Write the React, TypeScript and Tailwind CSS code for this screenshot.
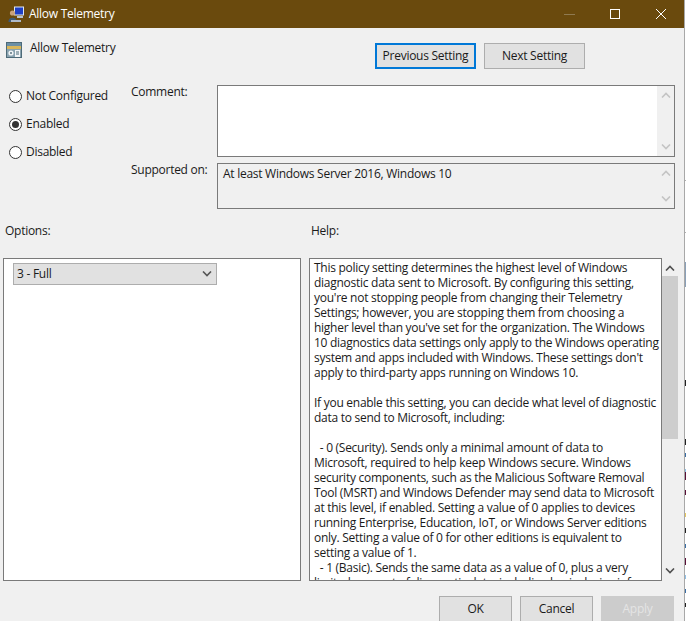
const helpLines = [
  'This policy setting determines the highest level of Windows',
  'diagnostic data sent to Microsoft. By configuring this setting,',
  "you're not stopping people from changing their Telemetry",
  'Settings; however, you are stopping them from choosing a',
  "higher level than you've set for the organization. The Windows",
  '10 diagnostics data settings only apply to the Windows operating',
  "system and apps included with Windows. These settings don't",
  'apply to third-party apps running on Windows 10.',
  ' ',
  'If you enable this setting, you can decide what level of diagnostic',
  'data to send to Microsoft, including:',
  ' ',
  '  - 0 (Security). Sends only a minimal amount of data to',
  'Microsoft, required to help keep Windows secure. Windows',
  'security components, such as the Malicious Software Removal',
  'Tool (MSRT) and Windows Defender may send data to Microsoft',
  'at this level, if enabled. Setting a value of 0 applies to devices',
  'running Enterprise, Education, IoT, or Windows Server editions',
  'only. Setting a value of 0 for other editions is equivalent to',
  'setting a value of 1.',
  '  - 1 (Basic). Sends the same data as a value of 0, plus a very',
  'limited amount of diagnostic data, including basic device info,',
];

// what shows of the window behind, along the right edge
const edgeMarks = [
  { y: 180, h: 1, c: '#b0b0b0' },
  { y: 232, h: 1, c: '#b0b0b0' },
  { y: 262, h: 25, c: '#8aa0b8' },
  { y: 380, h: 6, c: '#222222' },
  { y: 439, h: 6, c: '#222222' },
  { y: 453, h: 4, c: '#3a6ea5' },
  { y: 469, h: 3, c: '#8ec0e8' },
  { y: 472, h: 8, c: '#5a1038' },
  { y: 490, h: 5, c: '#5a1038' },
  { y: 513, h: 4, c: '#e8c860' },
  { y: 528, h: 5, c: '#222222' },
  { y: 544, h: 4, c: '#3a6ea5' },
  { y: 558, h: 7, c: '#5a1038' },
  { y: 575, h: 4, c: '#8ec0e8' },
  { y: 589, h: 4, c: '#3a6ea5' },
  { y: 603, h: 4, c: '#222222' },
];

const Chevron = ({ up, className }: { up?: boolean; className?: string }) => (
  <svg width="10" height="6" viewBox="0 0 10 6" fill="none" stroke="currentColor" strokeWidth="1.6" className={className}>
    <path d={up ? 'M1 5.5 L5 1.5 L9 5.5' : 'M1 0.5 L5 4.5 L9 0.5'} />
  </svg>
);

const WindowIcon = () => (
  <svg width="17" height="17" viewBox="0 0 17 17">
    <rect x="6" y="0.5" width="10" height="9" fill="#dfe6f2" />
    <rect x="7" y="1.5" width="8" height="7" fill="#1f3fc4" />
    <rect x="9" y="10" width="6" height="2" fill="#b9c2d0" />
    <circle cx="4.5" cy="7" r="2.6" fill="#c9a27c" />
    <path d="M0.5 15 C0.5 10.5 8.5 10.5 8.5 15 L8.5 16 L0.5 16 Z" fill="#3e5a78" />
    <rect x="3" y="14" width="10" height="2" fill="#aeb9c7" />
  </svg>
);

const SettingIcon = () => (
  <svg width="16" height="16" viewBox="0 0 16 16">
    <rect x="0" y="0" width="16" height="16" fill="#4d6a78" />
    <rect x="1" y="1" width="14" height="3" fill="#6b8fa6" />
    <rect x="1" y="4" width="14" height="3" fill="#d9b65a" />
    <rect x="1" y="7" width="14" height="8" fill="#8aa3b0" />
    <circle cx="5" cy="11" r="2.6" fill="#f2f5f7" />
    <circle cx="5" cy="11" r="1" fill="#5b7482" />
    <rect x="9" y="8" width="5" height="7" fill="#f2f5f7" />
    <path d="M10 10 H13 M10 12 H13" stroke="#4d6a78" strokeWidth="1" />
  </svg>
);

const Radio = ({ label, checked }: { label: string; checked?: boolean }) => (
  <div className="flex h-[28px] items-center">
    <span className="flex h-[13px] w-[13px] items-center justify-center rounded-full border border-[#333333] bg-white">
      {checked && <span className="h-[7px] w-[7px] rounded-full bg-[#333333]" />}
    </span>
    <span className="mb-[2px] ml-[4px]">{label}</span>
  </div>
);

const Button = ({ label, className }: { label: string; className: string }) => (
  <div className={`flex h-[26px] items-center justify-center pb-[2px] ${className}`}>{label}</div>
);

const SmallScroll = () => (
  <div className="flex w-[17px] flex-col items-center justify-between bg-[#f0f0f0] py-[6px] text-[#c4c4c4]">
    <Chevron up />
    <Chevron />
  </div>
);

export default function App() {
  return (
    <div className="flex h-[621px] w-[686px] overflow-hidden bg-white font-['Open_Sans',sans-serif] text-[12px] leading-[15px] tracking-[-0.27px] text-[#1a1a1a]">
      <div className="flex w-[684px] shrink-0 flex-col bg-[#f0f0f0]">
        {/* title bar */}
        <div className="flex h-[28px] shrink-0 items-center bg-[#6a4a0d] pl-[8px] text-white">
          <WindowIcon />
          <span className="mb-[2px] ml-[4px]">Allow Telemetry</span>
          <div className="ml-auto flex items-center pr-[18px]">
            <div className="mr-[35px] h-px w-[11px] bg-[#8f7a50]" />
            <div className="mr-[36px] h-[10px] w-[10px] border border-white" />
            <svg width="10" height="10" viewBox="0 0 10 10" stroke="white" strokeWidth="1">
              <path d="M0 0 L10 10 M10 0 L0 10" />
            </svg>
          </div>
        </div>

        {/* setting name + prev / next */}
        <div className="mt-[14px] flex h-[27px] items-start pl-[6px] pr-[99px]">
          <SettingIcon />
          <span className="ml-[8px] mt-[-2px]">Allow Telemetry</span>
          <div className="ml-auto mt-[1px] flex gap-[8px]">
            <Button label="Previous Setting" className="w-[101px] border-2 border-[#0078d7] bg-[#e1e1e1]" />
            <Button label="Next Setting" className="w-[101px] border border-[#adadad] bg-[#e1e1e1]" />
          </div>
        </div>

        {/* state + comment */}
        <div className="mt-[13px] flex">
          <div className="w-[131px] shrink-0 pl-[9px]">
            <Radio label="Not Configured" />
            <Radio label="Enabled" checked />
            <Radio label="Disabled" />
          </div>
          <div className="pt-[3px]">
            <div className="flex h-[72px]">
              <div className="mt-[1px] h-[12px] w-[86px] leading-[12px]">Comment:</div>
              <div className="flex w-[458px] border border-[#7a7a7a] bg-white">
                <div className="flex-1" />
                <SmallScroll />
              </div>
            </div>
            <div className="mt-[6px] flex h-[46px]">
              <div className="mt-[1px] h-[12px] w-[86px] leading-[12px]">Supported on:</div>
              <div className="flex w-[458px] border border-[#7a7a7a] bg-[#f0f0f0]">
                <div className="flex-1 pl-[5px] pt-[2px]">At least Windows Server 2016, Windows 10</div>
                <SmallScroll />
              </div>
            </div>
          </div>
        </div>

        <div className="mt-[16px] flex h-[12px] leading-[12px]">
          <div className="w-[311px] pl-[5px]">Options:</div>
          <div>Help:</div>
        </div>

        {/* options + help */}
        <div className="mt-[21px] flex h-[323px] pl-[3px]">
          <div className="w-[298px] shrink-0 border border-[#7a7a7a] bg-white pl-[9px] pt-[4px]">
            <div className="flex h-[22px] w-[204px] items-center justify-between border border-[#adadad] bg-[#e1e1e1] pl-[3px] pr-[4px]">
              <span className="mb-[2px]">3 - Full</span>
              <Chevron className="text-[#555555]" />
            </div>
          </div>
          <div className="ml-[8px] w-[353px] shrink-0 overflow-hidden border border-[#7a7a7a] bg-white pl-[4px] pt-[1px]">
            {helpLines.map((line, i) => (
              <div key={i} className="h-[15px] whitespace-pre">{line}</div>
            ))}
          </div>
          <div className="flex w-[16px] flex-col items-center pt-[7px] text-[#505050]">
            <Chevron up />
            <div className="mt-[5px] h-[163px] w-full bg-[#cdcdcd]" />
            <Chevron className="mt-[129px]" />
          </div>
        </div>

        {/* footer */}
        <div className="mt-[15px] flex justify-end gap-[8px] pr-[10px]">
          <Button label="OK" className="w-[73px] border border-[#adadad] bg-[#e1e1e1]" />
          <Button label="Cancel" className="w-[73px] border border-[#adadad] bg-[#e1e1e1]" />
          <Button label="Apply" className="w-[73px] bg-[#cccccc] text-[#e4e4e4]" />
        </div>
      </div>

      {/* window edge + sliver of whatever is behind */}
      <div className="w-px shrink-0 bg-[#a8a8a8]" />
      <svg width="1" height="621" className="shrink-0">
        {edgeMarks.map((m) => (
          <rect key={m.y} x="0" y={m.y} width="1" height={m.h} fill={m.c} />
        ))}
      </svg>
    </div>
  );
}
